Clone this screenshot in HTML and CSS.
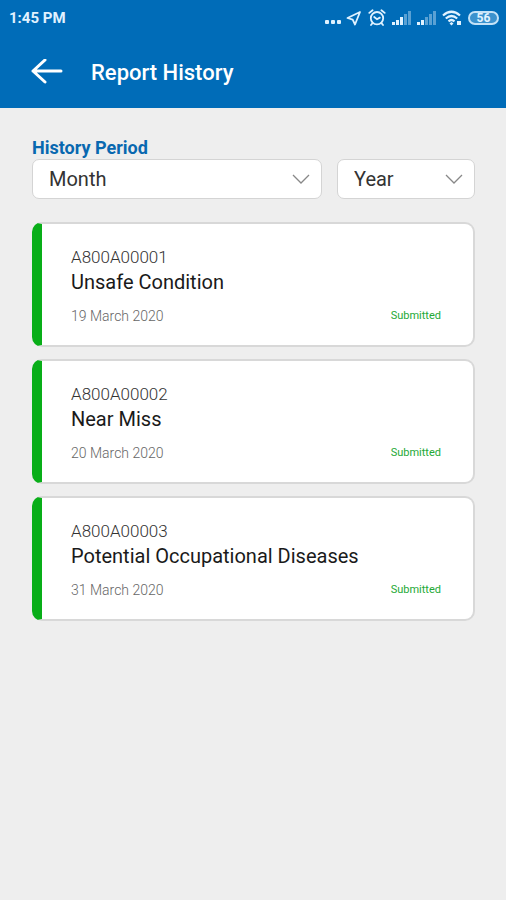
FILE: index.html
```html
<!DOCTYPE html>
<html lang="en">
<head>
<meta charset="utf-8">
<meta name="viewport" content="width=device-width, initial-scale=1">
<title>Report History</title>
<link rel="stylesheet" href="styles.css">
</head>
<body>
<header class="header">
  <div class="status">
    <time class="clock">1:45 PM</time>
    <div class="indicators">
      <svg class="dots" width="17" height="16" viewBox="0 0 17 16" fill="currentColor"><rect x="0" y="10" width="4" height="4" rx="1"/><rect x="6" y="10" width="4" height="4" rx="1"/><rect x="12" y="10" width="4" height="4" rx="1"/></svg>
      <svg width="16" height="16" viewBox="0 0 16 16" fill="none" stroke="currentColor" stroke-width="1.8" stroke-linejoin="round"><path d="M14 2 1.5 8l5.2 1.6L9 14.5z"/></svg>
      <svg class="alarm" width="18" height="18" viewBox="0 0 18 18" fill="none" stroke="currentColor" stroke-width="1.8" stroke-linecap="round"><circle cx="9" cy="9.2" r="6.2"/><path d="M1.3 3.900 4.6 1.2M16.7 3.900l-3.3-2.7M4.5 14.2 3 16M13.5 14.2l1.5 1.8M6.2 8 9 10.2l2.8-1.6"/></svg>
      <svg class="signal" width="19" height="16" viewBox="0 0 19 16" fill="currentColor"><path d="M0 12h3v3H0zM4 10h3v5H4zM8 7h3v8H8z"/><path opacity=".4" d="M12 4h3v11h-3zM16 1h3v14h-3z"/></svg>
      <svg class="signal" width="19" height="16" viewBox="0 0 19 16" fill="currentColor"><path d="M0 12h3v3H0zM4 10h3v5H4z"/><path opacity=".4" d="M8 7h3v8H8zM12 4h3v11h-3zM16 1h3v14h-3z"/></svg>
      <svg class="wifi" width="20" height="16" viewBox="0 0 20 16" fill="none" stroke="currentColor" stroke-width="2.2"><path d="M1 5.500q8.500-7.500 17 0M3.800 8.500q5.700-5 11.400 0M6.500 11.300q3-2.600 6 0"/><path fill="currentColor" stroke="none" d="m9.500 12 2 1.500-2 2-2-2zM15 11h4v4h-4z"/></svg>
      <span class="battery">56</span>
    </div>
  </div>
  <div class="toolbar">
    <button class="back" type="button" aria-label="Back">
      <svg width="32" height="26" viewBox="0 0 32 26" fill="none" stroke="currentColor" stroke-width="3" stroke-linecap="round" stroke-linejoin="round"><path d="M30 12H2M14 1 2 12l12 11"/></svg>
    </button>
    <h1 class="title">Report History</h1>
  </div>
</header>
<main class="content">
  <form>
    <fieldset class="period">
      <legend class="legend">History Period</legend>
      <div class="fields">
        <div class="field month">
          <select class="select" aria-label="Month"><option>Month</option></select>
          <svg class="chevron" width="18" height="10" viewBox="0 0 18 10" fill="none" stroke="currentColor" stroke-width="1.300"><path d="m1 1 8 8 8-8"/></svg>
        </div>
        <div class="field year">
          <select class="select" aria-label="Year"><option>Year</option></select>
          <svg class="chevron" width="18" height="10" viewBox="0 0 18 10" fill="none" stroke="currentColor" stroke-width="1.300"><path d="m1 1 8 8 8-8"/></svg>
        </div>
      </div>
    </fieldset>
  </form>
  <ul class="reports">
    <li class="report">
      <p class="number">A800A00001</p>
      <h2 class="name">Unsafe Condition</h2>
      <div class="meta"><time class="date">19 March 2020</time><span class="state">Submitted</span></div>
    </li>
    <li class="report">
      <p class="number">A800A00002</p>
      <h2 class="name">Near Miss</h2>
      <div class="meta"><time class="date">20 March 2020</time><span class="state">Submitted</span></div>
    </li>
    <li class="report">
      <p class="number">A800A00003</p>
      <h2 class="name">Potential Occupational Diseases</h2>
      <div class="meta"><time class="date">31 March 2020</time><span class="state">Submitted</span></div>
    </li>
  </ul>
</main>
</body>
</html>
```
FILE: styles.css
```css
* {
  box-sizing: border-box;
  margin: 0;
  padding: 0;
}

body {
  min-height: 100vh;
  background: #eee;
  color: #222;
  font-family: Roboto, "Liberation Sans", sans-serif;
}

svg {
  display: block;
  flex: none;
}

.header {
  background: #006cb8;
  color: #fff;
}

.status {
  display: flex;
  align-items: center;
  justify-content: space-between;
  height: 36px;
  padding: 0 7px 0 9px;
  color: #e0f2ff;
}

.clock {
  font-size: 15px;
  font-weight: 700;
}

.indicators {
  display: flex;
  align-items: center;
  gap: 6px;
}

.dots {
  margin-right: -2px;
}

.battery {
  width: 31px;
  height: 14px;
  border: 2px solid #c4e2f7;
  border-radius: 7px;
  background: #3b92ce;
  font-size: 12px;
  font-weight: 700;
  line-height: 10px;
  text-align: center;
}

.toolbar {
  display: flex;
  align-items: center;
  gap: 28px;
  height: 72px;
  padding: 0 32px 0 31px;
}

.back {
  border: 0;
  background: none;
  color: inherit;
}

.title {
  font-size: 22px;
  font-weight: 500;
}

.content {
  padding: 28px 31px 28px 32px;
}

.period {
  border: 0;
}

.legend {
  color: #0868b0;
  font-size: 18px;
  font-weight: 700;
  line-height: 23px;
}

.fields {
  display: flex;
  gap: 15px;
}

.field {
  display: grid;
  align-items: center;
}

.month {
  flex: 290;
}

.year {
  flex: 138;
}

.select,
.chevron {
  grid-area: 1 / 1;
}

.select {
  width: 100%;
  height: 40px;
  padding: 0 16px;
  appearance: none;
  border: 1px solid #d4d4d4;
  border-radius: 7px;
  background: #fff;
  color: #333;
  font: 20px Roboto, "Liberation Sans", sans-serif;
}

.chevron {
  justify-self: end;
  margin-right: 12px;
  color: #888;
  pointer-events: none;
}

.reports {
  display: grid;
  gap: 12px;
  margin-top: 23px;
  list-style: none;
}

.report {
  padding: 22px 32px 19px 29px;
  border: 2px solid #d8d8d8;
  border-left: 10px solid #08ae18;
  border-radius: 10px;
  background: #fff;
}

.number {
  color: #333;
  font-size: 17px;
  font-weight: 300;
  line-height: 22px;
}

.name {
  color: #1a1a1a;
  font-size: 20px;
  font-weight: 400;
  line-height: 28px;
}

.meta {
  display: flex;
  align-items: center;
  justify-content: space-between;
  margin-top: 10px;
  line-height: 20px;
}

.date {
  color: #666;
  font-size: 14px;
  font-weight: 300;
}

.state {
  color: #24a936;
  font-size: 11px;
}
```
